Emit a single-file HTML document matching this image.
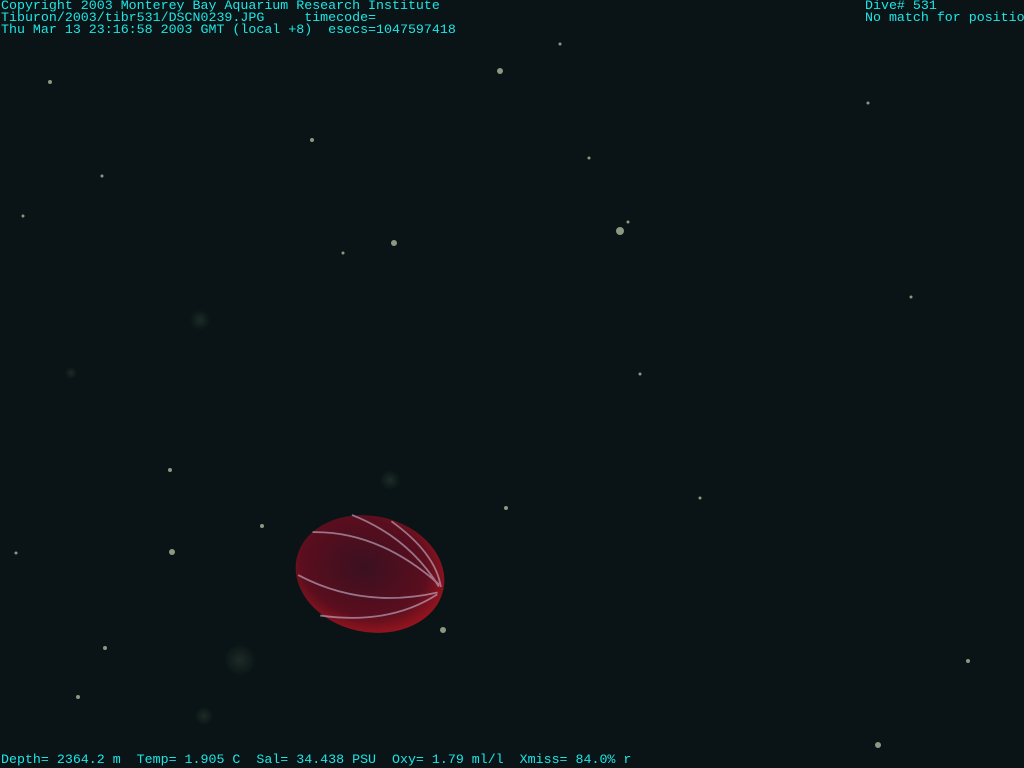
<!DOCTYPE html>
<html><head><style>
html,body{margin:0;padding:0;width:1024px;height:768px;overflow:hidden;background:#0a1416;}
.t{position:absolute;font-family:"Liberation Mono",monospace;font-size:13.3px;line-height:12px;color:#1ee6e6;white-space:pre;}
svg{position:absolute;left:0;top:0}
</style></head><body>
<svg width="1024" height="768">
<defs>
<radialGradient id="b" cx="0.45" cy="0.45" r="0.6">
<stop offset="0" stop-color="#3a1020"/><stop offset="0.7" stop-color="#5a0e1e"/><stop offset="1" stop-color="#a0161e"/>
</radialGradient>
<radialGradient id="g"><stop offset="0" stop-color="#2a3a30" stop-opacity=".6"/><stop offset="1" stop-color="#2a3a30" stop-opacity="0"/></radialGradient>
</defs>
<g fill="#8a9a80">
<circle cx="50" cy="82" r="2"/><circle cx="500" cy="71" r="3"/><circle cx="620" cy="231" r="4"/><circle cx="394" cy="243" r="3"/><circle cx="343" cy="253" r="1.5"/><circle cx="312" cy="140" r="2"/><circle cx="589" cy="158" r="1.5"/><circle cx="628" cy="222" r="1.5"/><circle cx="71" cy="373" r="6" fill="url(#g)"/><circle cx="240" cy="660" r="16" fill="url(#g)"/><circle cx="204" cy="716" r="9" fill="url(#g)"/><circle cx="390" cy="480" r="10" fill="url(#g)"/><circle cx="200" cy="320" r="10" fill="url(#g)"/>
<circle cx="170" cy="470" r="2"/><circle cx="102" cy="176" r="1.5"/><circle cx="911" cy="297" r="1.5"/><circle cx="506" cy="508" r="2"/><circle cx="105" cy="648" r="2"/><circle cx="78" cy="697" r="2"/><circle cx="443" cy="630" r="3"/><circle cx="968" cy="661" r="2"/><circle cx="262" cy="526" r="2"/><circle cx="172" cy="552" r="3"/><circle cx="878" cy="745" r="3"/><circle cx="640" cy="374" r="1.5"/><circle cx="700" cy="498" r="1.5"/><circle cx="23" cy="216" r="1.5"/><circle cx="560" cy="44" r="1.5"/><circle cx="868" cy="103" r="1.5"/><circle cx="16" cy="553" r="1.5"/>
</g>
<g transform="rotate(12 370 574)">
<ellipse cx="370" cy="574" rx="75" ry="58" fill="url(#b)"/>
<g fill="none" stroke="#c8b8d0" stroke-width="1.8" opacity=".6">
<path d="M305 545 Q370 530 440 570"/>
<path d="M300 590 Q370 610 440 578"/>
<path d="M340 520 Q400 530 440 572"/>
<path d="M380 518 Q430 540 442 572"/>
<path d="M330 625 Q400 620 440 580"/>
</g>
</g>
</svg>
<div class="t" style="left:1px;top:0px">Copyright 2003 Monterey Bay Aquarium Research Institute
Tiburon/2003/tibr531/DSCN0239.JPG     timecode=
Thu Mar 13 23:16:58 2003 GMT (local +8)  esecs=1047597418</div>
<div class="t" style="left:865px;top:0px">Dive# 531
No match for positio</div>
<div class="t" style="left:1px;top:754px">Depth= 2364.2 m  Temp= 1.905 C  Sal= 34.438 PSU  Oxy= 1.79 ml/l  Xmiss= 84.0% r</div>
</body></html>
